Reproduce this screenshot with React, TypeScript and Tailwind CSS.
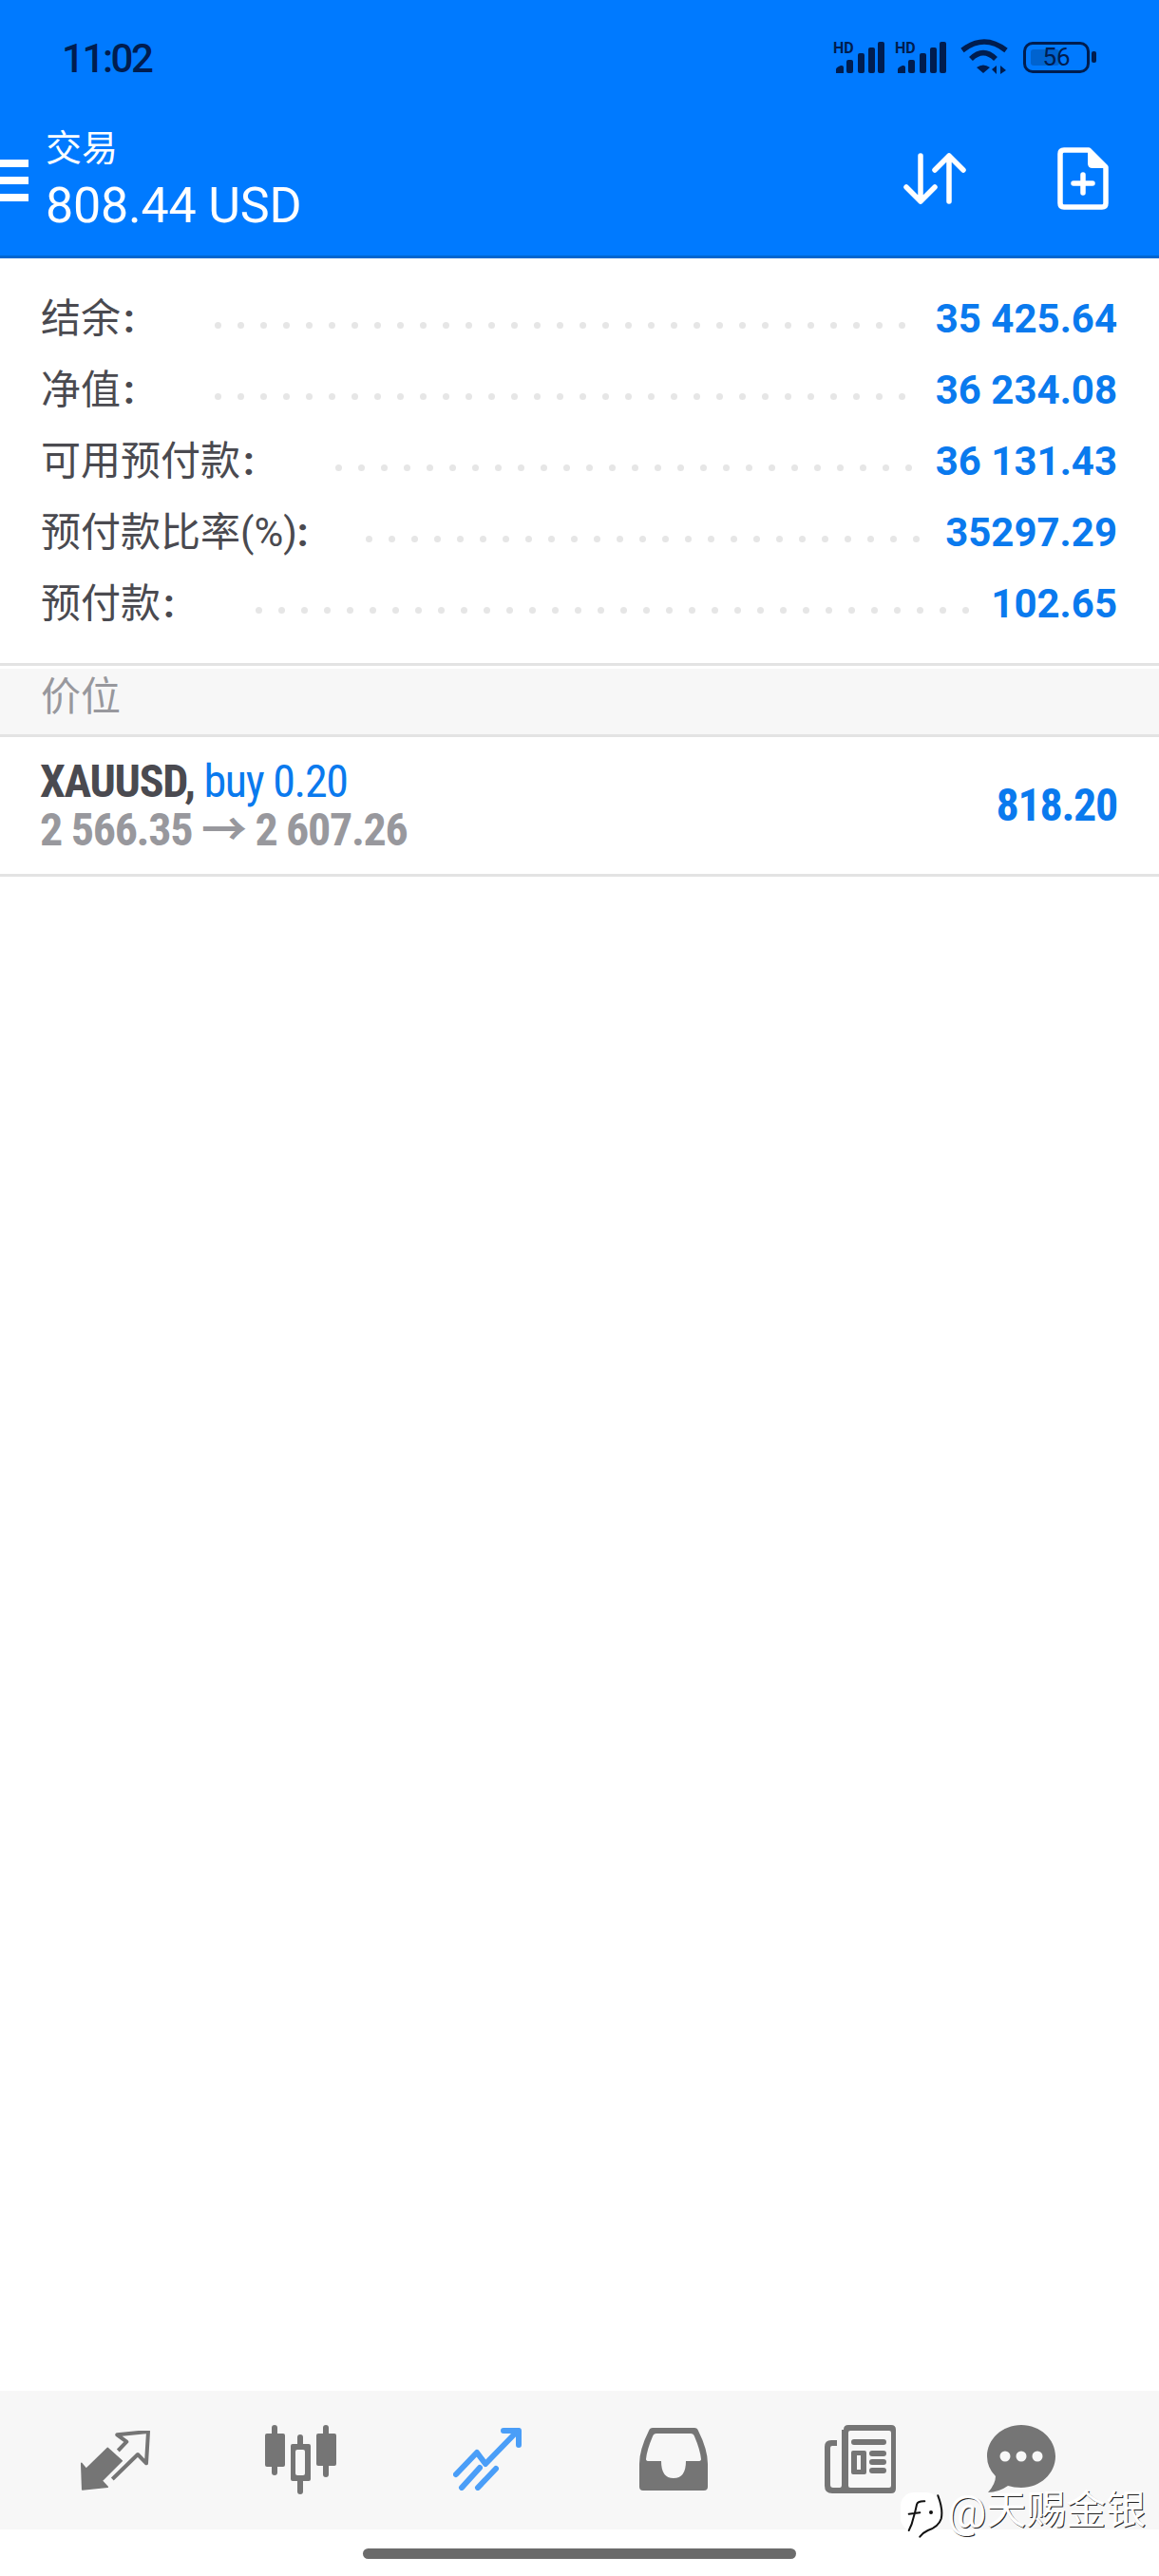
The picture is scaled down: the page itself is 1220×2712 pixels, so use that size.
import React from 'react';

const rows = [
  { label: '结余', colonClass: 'ml-[3px]', value: '35 425.64', dots: 31, dotsClass: 'ml-[84px]' },
  { label: '净值', colonClass: 'ml-[3px]', value: '36 234.08', dots: 31, dotsClass: 'ml-[84px]' },
  { label: '可用预付款', colonClass: 'ml-[3px]', value: '36 131.43', dots: 26, dotsClass: 'ml-[85px]' },
  { label: '预付款比率(%)', colonClass: 'ml-0', value: '35297.29', dots: 25, dotsClass: 'ml-[60px]' },
  { label: '预付款', colonClass: 'ml-[3px]', value: '102.65', dots: 32, dotsClass: 'ml-[85px]' },
];

const SignalIcon = () => (
  <div className="relative w-[54px] h-[33px]">
    <span className="absolute left-0 top-0 text-[16px] leading-[13px] font-bold text-[#001d4f]">HD</span>
    <svg width="54" height="33" viewBox="0 0 54 33" fill="#001d4f">
      <path d="M3 33v-4q0-2 5-4h1q2 0 2 2v6z" />
      <rect x="14" y="19" width="7" height="14" rx="2" />
      <rect x="26" y="12" width="7" height="21" rx="2" />
      <rect x="37" y="6" width="7" height="27" rx="2" />
      <rect x="47" y="0" width="7" height="33" rx="2" />
    </svg>
  </div>
);

const StatusBar = () => (
  <div className="h-[120px] pl-[65px] pr-[66px] flex items-center justify-between">
    <span className="text-[42px] font-medium tracking-[-2.4px] text-[#001d4f] translate-y-[1px]">11:02</span>
    <div className="flex items-center">
      <SignalIcon />
      <div className="ml-[11px]"><SignalIcon /></div>
      <svg className="ml-[15px]" width="50" height="38" viewBox="0 0 50 38" fill="none" stroke="#001d4f" strokeWidth="5.5">
        <path d="M2 12Q25 -6 48 12" />
        <path d="M11 21Q24 8 37 21" />
        <path d="M24 36l-7-6q7-5 14 0z" fill="#001d4f" stroke="none" />
        <path d="M38 28v9l-5-5zM42 37v-9l6 5z" fill="#001d4f" stroke="none" />
      </svg>
      <div className="ml-[16px] w-[70px] h-[33px] border-[3px] border-[#001d4f] rounded-[10px] relative flex items-center justify-center">
        <div className="absolute left-[5px] top-[5px] bottom-[5px] w-[30px] rounded-[3px] bg-[#0063cf]" />
        <span className="relative text-[26px] leading-none text-[#001d4f]">56</span>
      </div>
      <div className="ml-[2px] w-[5px] h-[12px] rounded-[2px] bg-[#001d4f]" />
    </div>
  </div>
);

const TitleBar = () => (
  <div className="h-[149px] relative flex items-start justify-between">
    <div className="absolute left-0 top-[48px] w-[30px] flex flex-col gap-[10px]">
      <div className="h-[8px] bg-white" />
      <div className="h-[8px] bg-white" />
      <div className="h-[8px] bg-white" />
    </div>
    <div className="pl-[48px] text-white">
      <div className="h-[67px] pt-[11px] text-[38px] leading-[50px]">交易</div>
      <div className="text-[52px] leading-[60px] tracking-[-0.2px]">808.44 USD</div>
    </div>
    <div className="flex items-center pt-[35px] pr-[53px]">
      <svg width="66" height="54" viewBox="0 0 66 54" fill="none" stroke="#fff" strokeWidth="5.5" strokeLinecap="round" strokeLinejoin="round">
        <path d="M18 3v48M3 36l15 15 15-15" />
        <path d="M48 51V3M33 18L48 3l15 15" />
      </svg>
      <svg className="ml-[96px]" width="54" height="66" viewBox="0 0 54 66" fill="none">
        <path d="M7 3h26l18 18v38q0 4-4 4H7q-4 0-4-4V7q0-4 4-4z" stroke="#fff" strokeWidth="5.5" strokeLinejoin="round" />
        <path d="M32 1v16q0 5 5 5h16z" fill="#fff" />
        <path d="M27 29v19M17 38h20" stroke="#fff" strokeWidth="5.5" strokeLinecap="round" />
      </svg>
    </div>
  </div>
);

const NavIcons = () => (
  <div className="h-[146px] bg-[#f7f7f7] relative">
    {/* exchange arrows */}
    <svg className="absolute left-[85px] top-[42px]" width="73" height="63" viewBox="0 0 73 63">
      <path d="M.7 34.3l5 6L28.3 18.3l15 13.4-21 21 6 6.6L1.7 62z" fill="#757575" stroke="#757575" strokeWidth="1.5" strokeLinejoin="round" />
      <path d="M39.3 21l9-9.3-10-7.4L71 1l-2 33.3L60 25 33.3 51" fill="none" stroke="#757575" strokeWidth="4" strokeLinejoin="round" />
    </svg>
    {/* candles */}
    <svg className="absolute left-[279px] top-[36px]" width="75" height="74" viewBox="0 0 75 74" fill="#757575">
      <rect x="0" y="9" width="21" height="35" rx="2" />
      <rect x="7" y="0" width="6" height="53" rx="3" />
      <rect x="54" y="9" width="21" height="34" rx="2" />
      <rect x="61" y="0" width="6" height="55" rx="3" />
      <rect x="27" y="20" width="21" height="39" rx="2" />
      <rect x="34" y="10" width="6" height="63" rx="3" />
      <rect x="32" y="26" width="10" height="27" rx="2" fill="#f7f7f7" />
    </svg>
    {/* trade, active */}
    <svg className="absolute left-[477px] top-[39px]" width="72" height="66" viewBox="0 0 72 66" fill="none" stroke="#4a9ef8" strokeWidth="6" strokeLinecap="round" strokeLinejoin="round">
      <path d="M3 49l22-23 9 12L68 3" />
      <path d="M53 3h16v15" />
      <path d="M9 63l19-21M26 63l19-20" />
    </svg>
    {/* inbox */}
    <svg className="absolute left-[673px] top-[39px]" width="72" height="66" viewBox="0 0 72 66" fill="#757575">
      <path fillRule="evenodd" d="M14 0h44q3 0 4 3 10 20 10 35v24q0 4-4 4H4q-4 0-4-4V38Q0 23 10 3q1-3 4-3zM18 6q-3 0-4 3-6 14-7 24 0 2 3 2h13q0 18 13 18t13-18h13q3 0 3-2-1-10-7-24-1-3-4-3z" />
    </svg>
    {/* news */}
    <svg className="absolute left-[868px] top-[36px]" width="75" height="72" viewBox="0 0 75 72" fill="#757575">
      <path fillRule="evenodd" d="M20 5q0-5 5-5h45q5 0 5 5v62q0 5-5 5H8q-8 0-8-8V23q0-7 7-7h6v6H8q-2 0-2 2v39q0 3 3 3h7q2 0 2-3V5zM27 6q-2 0-2 2v56q0 2 2 2h41q2 0 2-2V8q0-2-2-2zM31 15h31q3 0 3 3t-3 3H31q-3 0-3-3t3-3zM30 27h12q2 0 2 2v21q0 2-2 2H30q-2 0-2-2V29q0-2 2-2zM34 32v15h4V32zM50 27h12q3 0 3 3t-3 3H50q-3 0-3-3t3-3zM50 36h12q3 0 3 3t-3 3H50q-3 0-3-3t3-3zM50 45h12q3 0 3 3t-3 3H50q-3 0-3-3t3-3z" />
    </svg>
    {/* chat */}
    <svg className="absolute left-[1039px] top-[36px]" width="72" height="72" viewBox="0 0 72 72" fill="#757575">
      <path d="M36 0C56 0 72 15 72 33S56 66 36 66Q28 66 22 64 12 71 1 71 9 62 9 54 0 45 0 33C0 15 16 0 36 0z" />
      <circle cx="19" cy="33" r="5.5" fill="#f8f8f8" />
      <circle cx="36" cy="33" r="5.5" fill="#f8f8f8" />
      <circle cx="53" cy="33" r="5.5" fill="#f8f8f8" />
    </svg>
  </div>
);

export default function App() {
  return (
    <div className="w-[1220px] h-[2712px] bg-white flex flex-col relative overflow-hidden font-[Roboto,'Noto_Sans_CJK_SC',sans-serif]">
      <header className="bg-[#007aff] border-b-[3px] border-[#0066d0]">
        <StatusBar />
        <TitleBar />
      </header>

      <section className="pt-[26px] h-[426px] pl-[43px] pr-[43px]">
        {rows.map((r) => (
          <div key={r.label} className="h-[75px] flex items-center relative">
            <span className="text-[42px] leading-none text-[#4a4a50] shrink-0">
              {r.label}
              <span className={`font-bold ${r.colonClass}`}>:</span>
            </span>
            <div className={`flex gap-[17px] translate-y-[7px] ${r.dotsClass}`}>
              {Array.from({ length: r.dots }).map((_, i) => (
                <span key={i} className="w-[7px] h-[7px] rounded-full bg-[#e6e6e6]" />
              ))}
            </div>
            <span className="ml-auto -translate-x-[1px] text-[42px] leading-none font-bold text-[#0a7aee]">{r.value}</span>
          </div>
        ))}
      </section>

      <div className="h-[3px] bg-[#e3e3e3]" />
      <div className="mt-[3px] h-[69px] bg-[#f7f7f7] pl-[43px] pb-[10px] flex items-center">
        <span className="text-[42px] leading-none text-[#98989d]">价位</span>
      </div>
      <div className="h-[3px] bg-[#e3e3e3]" />

      <div className="h-[144px] pl-[42px] pr-[44px] flex items-center justify-between border-b-[3px] border-[#e3e3e3] box-content">
        <div className="flex flex-col tracking-[-1.3px] [font-stretch:condensed]">
          <div className="text-[48px] leading-[51px]">
            <span className="font-bold text-[#4a4a50]">XAUUSD,</span>{' '}
            <span className="text-[#0a7aee]">buy 0.20</span>
          </div>
          <div className="text-[48px] leading-[51px] font-bold text-[#98989d]">2 566.35 → 2 607.26</div>
        </div>
        <span className="text-[48px] font-bold tracking-[-1.3px] text-[#0a7aee] [font-stretch:condensed]">818.20</span>
      </div>

      <div className="flex-1" />

      <NavIcons />
      <div className="h-[49px] flex justify-center pt-[20px]">
        <div className="w-[456px] h-[11px] rounded-full bg-[#6b6b6b]" />
      </div>

      {/* platform watermark */}
      <div className="absolute left-[947px] top-[2622px] flex items-start text-white [text-shadow:1px_1px_0_#222]">
        <svg width="46" height="50" viewBox="0 0 46 50" fill="none" stroke="#111" strokeWidth="2" strokeLinecap="round">
          <rect x="1" y="2" width="41" height="41" rx="14" fill="#fff" stroke="none" />
          <path d="M26.3 11.3Q19 11 18 14.7 16 24 14.7 28 13 36 9.7 42M9.7 24.7l11.6-1.4" />
          <path d="M40.3 5.3Q46 20 43.7 29.7 41 38 29.7 42 25 44 21.3 48.7" />
          <circle cx="33" cy="23" r="1" fill="#111" />
        </svg>
        <span className="ml-[4px] text-[46px] leading-[46px]">@</span>
        <span className="text-[42px] leading-[42px]">天赐金银</span>
      </div>
    </div>
  );
}
